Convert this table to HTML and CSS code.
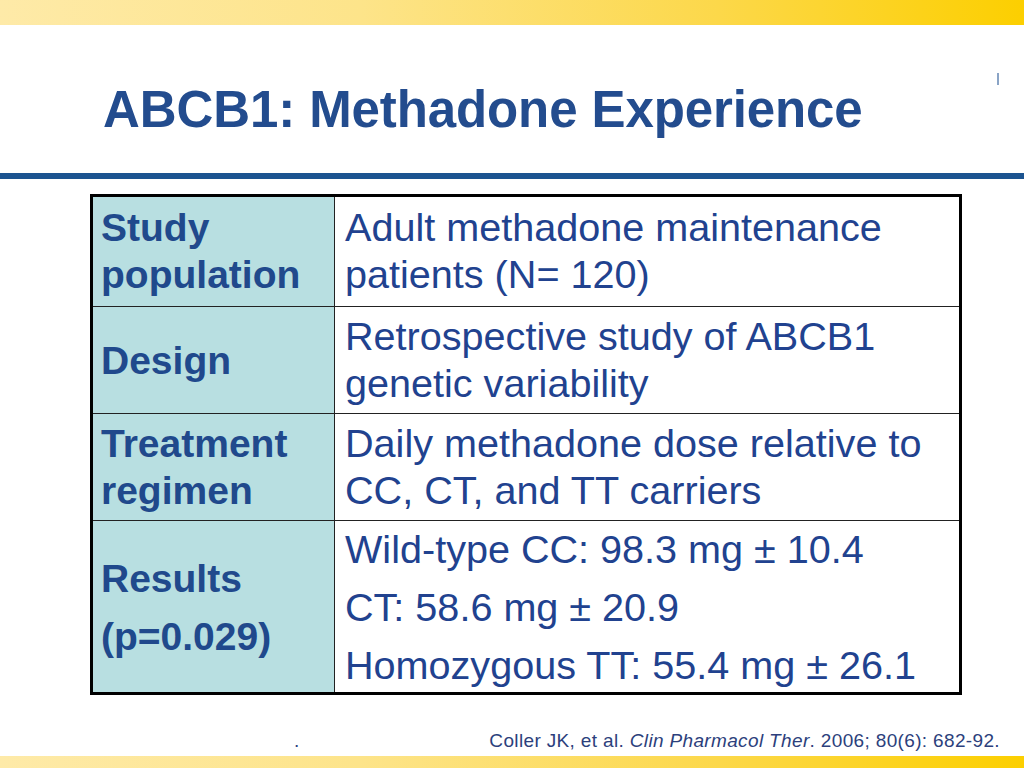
FILE: index.html
```html
<!DOCTYPE html>
<html lang="en">
<head>
<meta charset="utf-8">
<title>ABCB1: Methadone Experience</title>
<link rel="stylesheet" href="styles.css">
</head>
<body>
<div class="slide">
  <div class="band band-top"></div>
  <header class="header">
    <h1 class="title">ABCB1: Methadone Experience</h1>
    <span class="tick"></span>
  </header>
  <div class="rule"></div>
  <main class="content">
    <table class="grid">
      <colgroup>
        <col class="col-head">
        <col class="col-body">
      </colgroup>
      <tbody>
        <tr class="row-1">
          <th>Study population</th>
          <td>Adult methadone maintenance patients (N= 120)</td>
        </tr>
        <tr class="row-2">
          <th>Design</th>
          <td>Retrospective study of ABCB1 genetic variability</td>
        </tr>
        <tr class="row-3">
          <th>Treatment regimen</th>
          <td>Daily methadone dose relative to CC, CT, and TT carriers</td>
        </tr>
        <tr class="row-4">
          <th>
            <p>Results</p>
            <p>(p=0.029)</p>
          </th>
          <td>
            <p>Wild-type CC: 98.3 mg ± 10.4</p>
            <p>CT: 58.6 mg ± 20.9</p>
            <p>Homozygous TT: 55.4 mg ± 26.1</p>
          </td>
        </tr>
      </tbody>
    </table>
  </main>
  <footer class="footer">
    <span class="dot">.</span>
    <span class="cite">Coller JK, et al. <em>Clin Pharmacol Ther</em>. 2006; 80(6): 682-92.</span>
  </footer>
  <div class="band band-bottom"></div>
</div>
</body>
</html>
```

FILE: styles.css
```css
html, body {
  margin: 0;
  padding: 0;
  background: #ffffff;
}

body {
  width: 1024px;
  height: 768px;
  overflow: hidden;
  font-family: "Liberation Sans", Arial, Helvetica, sans-serif;
}

.slide {
  width: 1024px;
  height: 768px;
  display: flex;
  flex-direction: column;
  background: #ffffff;
}

.band {
  flex: 0 0 auto;
  background: linear-gradient(to right, #feeaa8 0%, #fde48a 35%, #fcd84a 70%, #fccf00 100%);
}

.band-top {
  height: 25px;
}

.band-bottom {
  height: 12px;
}

.header {
  position: relative;
  flex: 0 0 auto;
  height: 148px;
  padding: 59px 0 0 103px;
  box-sizing: border-box;
}

.title {
  margin: 0;
  font-size: 51px;
  line-height: 51px;
  font-weight: bold;
  color: #234c8e;
  letter-spacing: -0.1px;
}

.tick {
  position: absolute;
  left: 997px;
  top: 48px;
  width: 2px;
  height: 12px;
  background: #8aa4c6;
}

.rule {
  flex: 0 0 auto;
  height: 6px;
  background: #1c5490;
}

.content {
  flex: 1 1 auto;
  padding: 15px 0 0 90px;
}

.grid {
  width: 872px;
  table-layout: fixed;
  border-collapse: collapse;
  border: 3px solid #000000;
  font-size: 39.6px;
  line-height: 47px;
  color: #21428f;
}

.col-head {
  width: 243px;
}

.grid th,
.grid td {
  border: 1.5px solid #222222;
  vertical-align: middle;
  text-align: left;
}

.grid th {
  background: #b8dfe1;
  font-weight: bold;
  font-size: 39px;
  color: #20498c;
  padding: 6px 6px 6px 8px;
}

.grid td {
  background: #ffffff;
  font-weight: normal;
  padding: 6px 8px 6px 10px;
}

.row-1 th,
.row-1 td {
  padding-top: 7px;
  padding-bottom: 8px;
}

.row-4 th,
.row-4 td {
  padding-top: 5px;
  padding-bottom: 3px;
}

.grid p {
  margin: 0;
}

.grid p + p {
  margin-top: 11px;
}

.footer {
  flex: 0 0 auto;
  height: 30px;
  position: relative;
  display: flex;
  justify-content: flex-end;
  align-items: center;
  padding-right: 24px;
  font-size: 19px;
  line-height: 30px;
  color: #2c3f7c;
}

.cite {
  letter-spacing: 0.35px;
}

.cite em {
  font-style: italic;
}

.dot {
  position: absolute;
  left: 294px;
  top: 0;
}
```
